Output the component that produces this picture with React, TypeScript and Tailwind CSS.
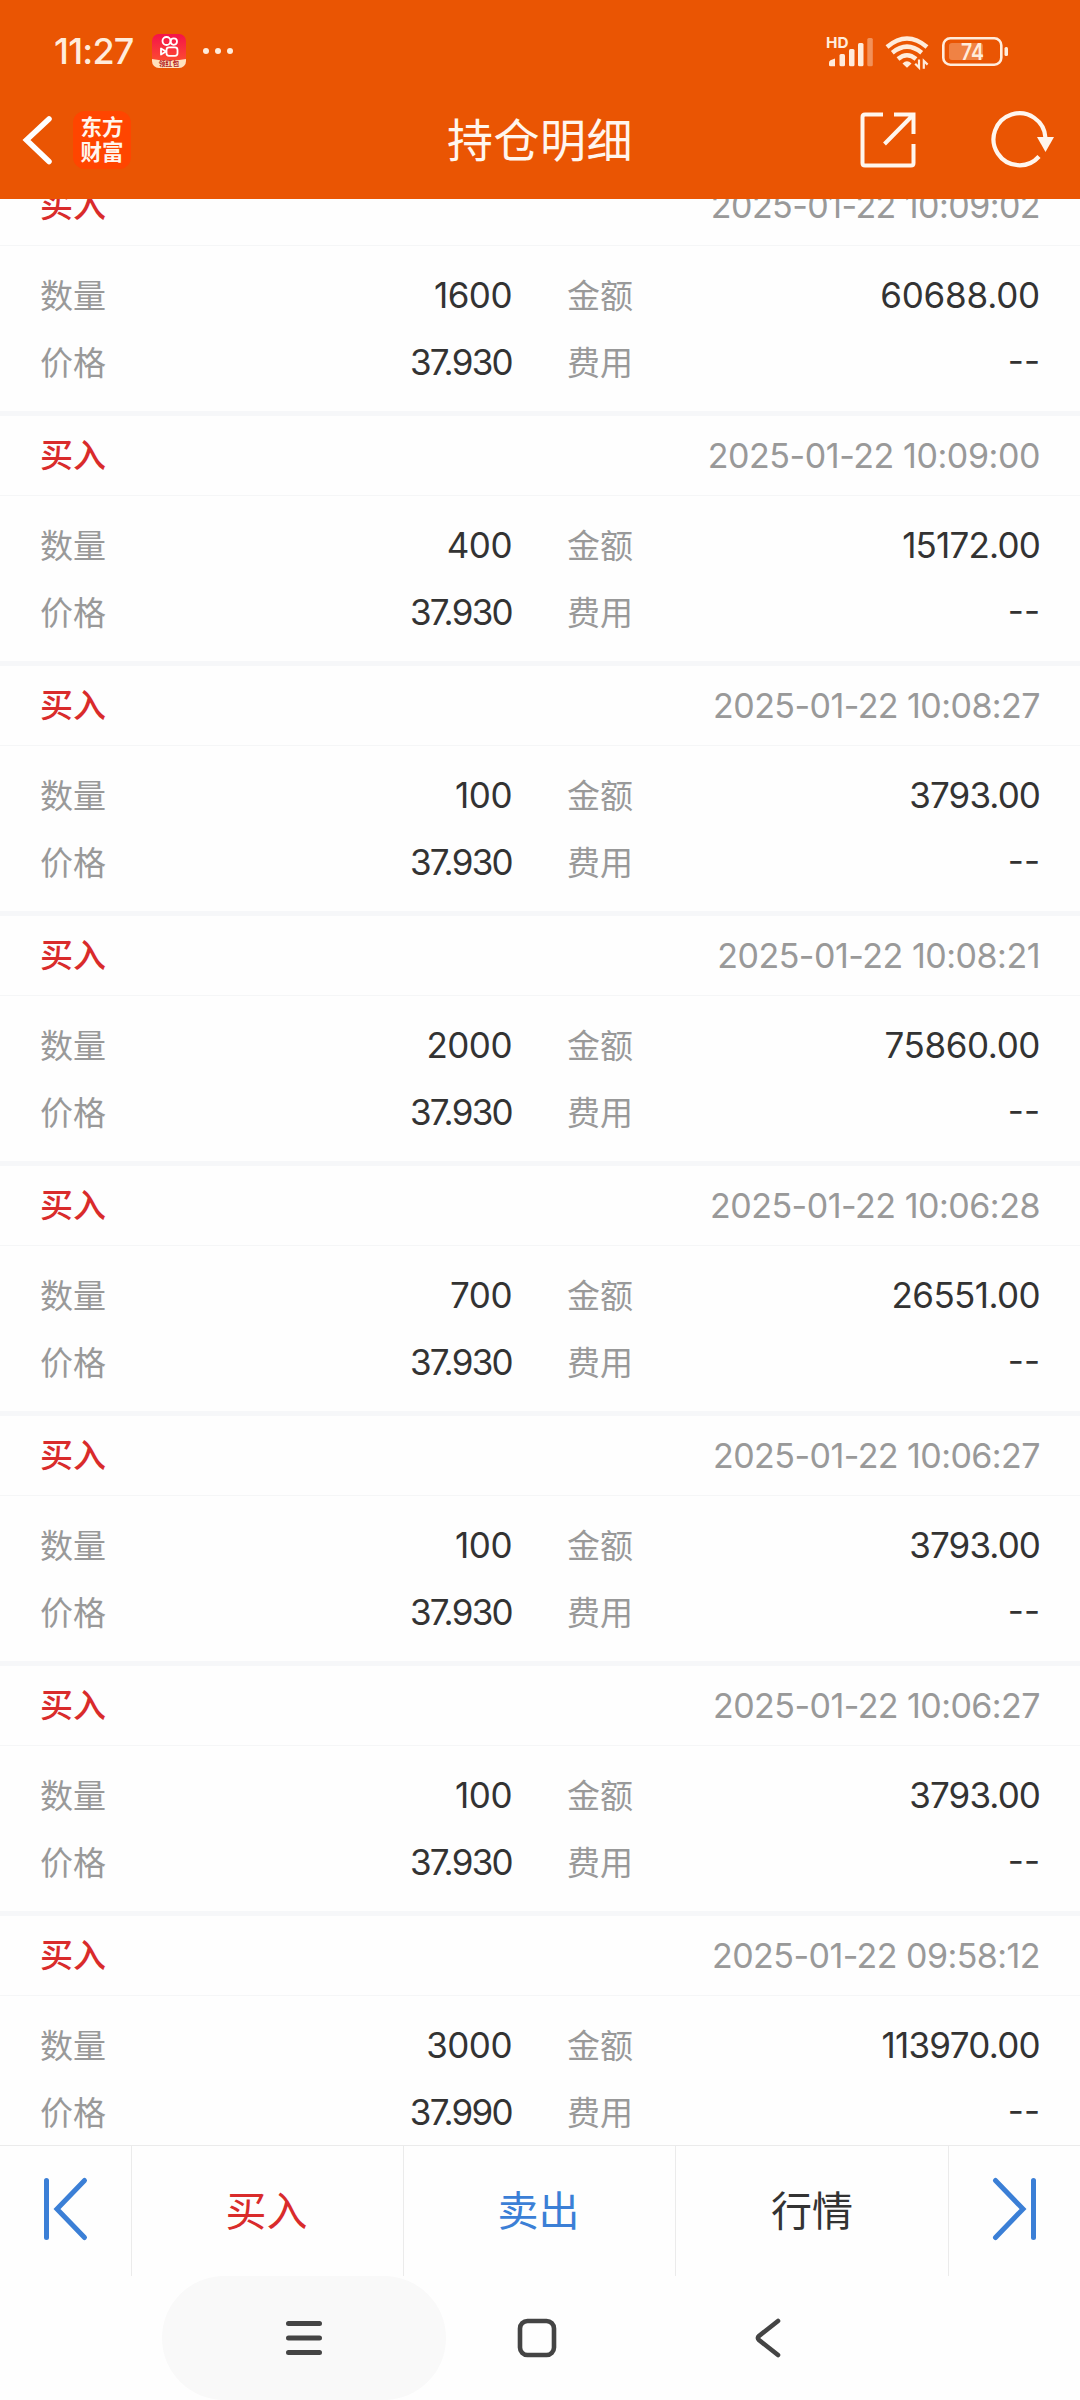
type Deal = {
  time: string;
  timeCls: string;
  count: string;
  price: string;
  amount: string;
  amountCls?: string;
};

const deals: Deal[] = [
  { time: '2025-01-22 10:09:02', timeCls: 'tracking-[-0.55px]', count: '1600', price: '37.930', amount: '60688.00' },
  { time: '2025-01-22 10:09:00', timeCls: 'tracking-[-0.42px]', count: '400', price: '37.930', amount: '15172.00', amountCls: 'tracking-[-0.8px]' },
  { time: '2025-01-22 10:08:27', timeCls: 'tracking-[-0.55px]', count: '100', price: '37.930', amount: '3793.00', amountCls: 'tracking-[-0.9px]' },
  { time: '2025-01-22 10:08:21', timeCls: 'tracking-[-0.48px]', count: '2000', price: '37.930', amount: '75860.00', amountCls: 'tracking-[-0.4px]' },
  { time: '2025-01-22 10:06:28', timeCls: 'tracking-[-0.48px]', count: '700', price: '37.930', amount: '26551.00', amountCls: 'tracking-[-0.6px]' },
  { time: '2025-01-22 10:06:27', timeCls: 'tracking-[-0.55px]', count: '100', price: '37.930', amount: '3793.00', amountCls: 'tracking-[-0.9px]' },
  { time: '2025-01-22 10:06:27', timeCls: 'tracking-[-0.55px]', count: '100', price: '37.930', amount: '3793.00', amountCls: 'tracking-[-0.9px]' },
  { time: '2025-01-22 09:58:12', timeCls: 'tracking-[-0.55px]', count: '3000', price: '37.990', amount: '113970.00', amountCls: 'tracking-[-0.7px]' },
];

function AppBadge() {
  return (
    <svg width="34" height="34" viewBox="0 0 34 34" className="ml-[19px]">
      <defs>
        <linearGradient id="badge" x1="0" y1="0" x2="0" y2="1">
          <stop offset="0" stopColor="#f5124a" />
          <stop offset="1" stopColor="#ff5a2a" />
        </linearGradient>
        <clipPath id="badgeClip">
          <rect width="34" height="34" rx="7" />
        </clipPath>
      </defs>
      <g clipPath="url(#badgeClip)">
        <rect width="34" height="34" fill="url(#badge)" />
        <path d="M0 25Q17 28 34 25V34H0Z" fill="#ffe3bd" />
        <g fill="none" stroke="#fff" strokeWidth="1.8">
          <circle cx="14.5" cy="7" r="4" />
          <circle cx="21.8" cy="7.6" r="3.2" />
          <rect x="14.5" y="13.4" width="11" height="8.4" rx="2.5" />
          <path d="M14 17.5L9 14.4V20.6Z" strokeLinejoin="round" />
        </g>
        <text x="17" y="32.4" textAnchor="middle" fontSize="6.8" fontWeight="700" fill="#b3201f">
          领红包
        </text>
      </g>
    </svg>
  );
}

function StatusIcons() {
  return (
    <svg width="184" height="40" viewBox="826 30 184 40" fill="#ffecdc">
      <text x="826" y="46.8" fontSize="15" fontWeight="700" textLength="22.5" lengthAdjust="spacingAndGlyphs">HD</text>
      <path d="M829 62Q829 60 830.5 59.3L835 57.5V65.3H830.5Q829 65.3 829 64Z" />
      <rect x="839.5" y="53" width="5.5" height="12.3" rx="1.5" />
      <rect x="849" y="48" width="5.5" height="17.3" rx="1.5" />
      <rect x="858" y="42" width="5.5" height="23.3" rx="1.5" />
      <rect x="867.3" y="37" width="5.5" height="28.3" rx="1.5" opacity="0.4" />
      <g fill="none" stroke="#ffecdc" strokeWidth="4.4">
        <path d="M887 46Q907 29 927 46" />
        <path d="M892.3 51.7Q907 39.5 921.7 51.7" />
        <path d="M898 58Q907 50.5 916 58" />
      </g>
      <path d="M902.5 62.5Q907 58 911.5 62.5L907 66.8Z" />
      <path d="M919 58.5v8l-3.8-3.8M923.8 67.8v-8l3.8 3.8" fill="none" stroke="#ffecdc" strokeWidth="2.2" />
      <rect x="943.3" y="37.3" width="58" height="26.4" rx="7" fill="none" stroke="#ffecdc" strokeWidth="2.6" />
      <rect x="949" y="42" width="34" height="17" rx="3" opacity="0.3" />
      <text x="961" y="59" fontSize="23.5" fontWeight="600" textLength="23" lengthAdjust="spacingAndGlyphs">74</text>
      <rect x="1004.5" y="46" width="3.5" height="9" rx="1.5" />
    </svg>
  );
}

function TopBar() {
  return (
    <header className="flex h-[199px] shrink-0 flex-col bg-[#ea5503] text-[#fff6ee]">
      <div className="flex h-[101px] items-center justify-between pr-[70px] pl-[54px] text-[#ffecdc]">
        <div className="flex items-center">
          <span className="w-[79px] text-[36px] leading-none font-medium tracking-[-0.8px]">11:27</span>
          <AppBadge />
          <div className="ml-[17px] flex gap-[6px]">
            <i className="size-[6px] rounded-full bg-current" />
            <i className="size-[6px] rounded-full bg-current" />
            <i className="size-[6px] rounded-full bg-current" />
          </div>
        </div>
        <StatusIcons />
      </div>
      <div className="grid h-[78px] grid-cols-[1fr_auto_1fr] items-center">
        <div className="flex items-center pl-[20px]">
          <svg width="36" height="54" viewBox="20 113 36 54" fill="none" stroke="#fff" strokeWidth="5.5" strokeLinecap="round">
            <path d="M49 119L26.5 140L49 161.5" />
          </svg>
          <div className="ml-[17px] flex size-[58px] flex-col items-center justify-center rounded-[12px] bg-[#ff4500] text-[21.5px] leading-[25px] font-bold">
            <span>东方</span>
            <span>财富</span>
          </div>
        </div>
        <h1 className="text-[46px] leading-none tracking-[0.5px]">持仓明细</h1>
        <div className="flex items-center justify-end pr-[24px]">
          <svg width="60" height="60" viewBox="858 110 60 60" fill="none" stroke="#fff6ee" strokeWidth="4">
            <path d="M883 114.5H865Q862.5 114.5 862.5 117V163Q862.5 165.5 865 165.5H911Q913.5 165.5 913.5 163V144M894 114.5H913.5V134M884.5 144L913 115" />
          </svg>
          <svg width="66" height="62" viewBox="990 109 66 62" className="ml-[72px]">
            <path d="M1045.5 138A26 26 0 1 0 1039 156.5" fill="none" stroke="#fff6ee" strokeWidth="4.2" />
            <path d="M1037 137H1054L1045.5 152Z" fill="#fff6ee" />
          </svg>
        </div>
      </div>
    </header>
  );
}

function DealCard({ deal }: { deal: Deal }) {
  return (
    <section className="border-t-[5px] border-[#f6f7f9]">
      <div className="flex h-[80px] items-center justify-between border-b border-[#f5f6f7] px-[40px]">
        <span className="text-[33px] font-medium text-[#d92b2b]">买入</span>
        <span className={`text-[34px] text-[#999] ${deal.timeCls}`}>{deal.time}</span>
      </div>
      <div className="grid h-[165px] grid-cols-[472px_1fr] content-center gap-x-[55px] px-[40px]">
        <Field label="数量" value={deal.count} valueCls="tracking-[-0.5px]" />
        <Field label="金额" value={deal.amount} valueCls={deal.amountCls ?? 'tracking-[-0.2px]'} />
        <Field label="价格" value={deal.price} valueCls="tracking-[-1.7px]" />
        <Field label="费用" value="--" valueCls="pb-[4px]" />
      </div>
    </section>
  );
}

function Field({ label, value, valueCls }: { label: string; value: string; valueCls: string }) {
  return (
    <div className="flex h-[67px] items-center justify-between">
      <span className="pt-[3px] text-[33px] text-[#999]">{label}</span>
      <span className={`text-[35px] text-[#333] ${valueCls}`}>{value}</span>
    </div>
  );
}

function TradeBar() {
  return (
    <div className="flex h-[131px] shrink-0 divide-x divide-[#ebebeb] border-t border-[#ebebeb] text-[41px]">
      <button className="flex w-[132px] items-center pb-[4px] pl-[41px]">
        <svg width="50" height="66" viewBox="41 2176 50 66" fill="none" stroke="#3b7fd6" strokeWidth="5" strokeLinecap="round">
          <path d="M46.5 2180.5V2237.5M84.5 2180.5L57 2209L84.5 2237.5" />
        </svg>
      </button>
      <button className="w-[272px] pt-[2px] pr-[2px] text-[#d92b2b]">买入</button>
      <button className="w-[272px] pt-[2px] pr-[2px] text-[#3b7fd6]">卖出</button>
      <button className="w-[273px] pt-[2px] text-[#333]">行情</button>
      <button className="flex flex-1 items-center pb-[4px] pl-[41px]">
        <svg width="50" height="66" viewBox="990 2176 50 66" fill="none" stroke="#3b7fd6" strokeWidth="5" strokeLinecap="round">
          <path d="M1033.5 2180.5V2237.5M995.5 2180.5L1023 2209L995.5 2237.5" />
        </svg>
      </button>
    </div>
  );
}

function SystemNav() {
  return (
    <nav className="flex h-[124px] shrink-0 items-center pl-[162px]">
      <div className="flex h-[124px] w-[284px] items-center justify-center rounded-full bg-[#f9f9f9]">
        <svg width="40" height="40" viewBox="0 0 40 40" stroke="#444" strokeWidth="5" strokeLinecap="round">
          <path d="M4.5 5.5H35.5M4.5 20H35.5M4.5 34.5H35.5" />
        </svg>
      </div>
      <svg width="44" height="44" viewBox="0 0 44 44" fill="none" stroke="#444" strokeWidth="4.6" className="ml-[69px]">
        <rect x="5" y="5" width="34" height="34" rx="7.5" />
      </svg>
      <svg width="30" height="44" viewBox="0 0 30 44" fill="none" stroke="#444" strokeWidth="4.6" strokeLinecap="round" className="ml-[194px]">
        <path d="M25 5L6 20Q4 22 6 24L25 39" />
      </svg>
    </nav>
  );
}

export default function App() {
  return (
    <div className="flex h-[2400px] w-[1080px] flex-col bg-[#fefefe] font-[Inter,'Noto_Sans_CJK_SC',sans-serif]">
      <TopBar />
      <main className="flex-1 overflow-hidden">
        {/* list is scrolled a little under the title bar */}
        <div className="-mt-[38px]">
          {deals.map((deal, i) => (
            <DealCard key={i} deal={deal} />
          ))}
        </div>
      </main>
      <TradeBar />
      <SystemNav />
    </div>
  );
}
